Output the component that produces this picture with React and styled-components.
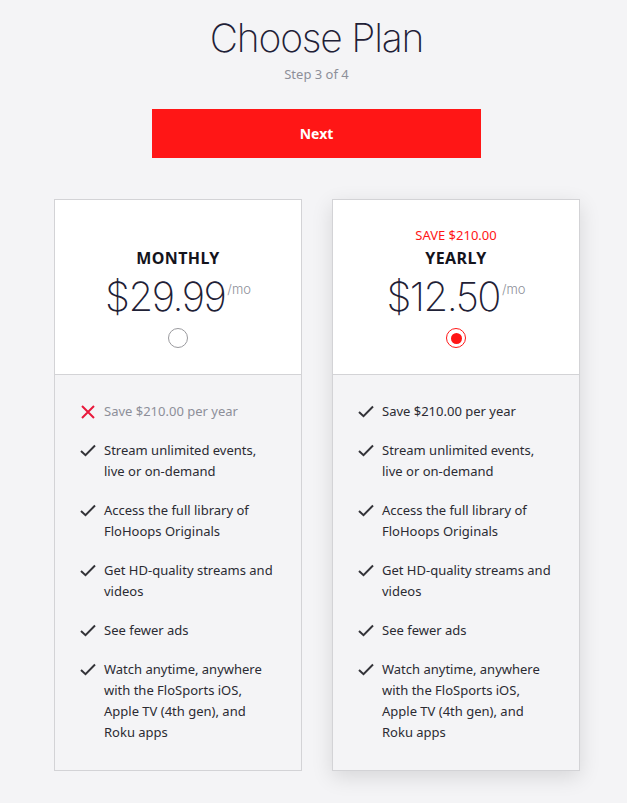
import React from "react";
import styled, { createGlobalStyle } from "styled-components";

const Global = createGlobalStyle`
  html, body { margin: 0; padding: 0; background: #f4f4f6; }
  body { font-family: "Noto Sans", "Liberation Sans", sans-serif; color: #2b2b33; }
  * { box-sizing: border-box; }
`;

const Page = styled.div`
  width: 627px;
  min-height: 803px;
  display: flex;
  flex-direction: column;
  align-items: center;
  padding: 16px 0 0 6px;
`;

const Title = styled.h1`
  margin: 0;
  font-family: "Inter", "Noto Sans", sans-serif;
  font-weight: 200;
  font-size: 39px;
  line-height: 44px;
  color: #1f2136;
  letter-spacing: -1.2px;
`;

const Step = styled.div`
  margin-top: 5px;
  font-size: 13px;
  line-height: 18px;
  color: #8d8f99;
`;

const NextButton = styled.button`
  margin-top: 26px;
  width: 329px;
  height: 49px;
  border: none;
  background: #ff1616;
  color: #fff;
  font-family: "Noto Sans", sans-serif;
  font-weight: 700;
  font-size: 14px;
  cursor: pointer;
`;

const Cards = styled.div`
  margin-top: 41px;
  display: grid;
  grid-template-columns: 248px 248px;
  gap: 30px;
  margin-left: 1px;
`;

const Card = styled.div`
  border: 1px solid #d3d3d6;
  display: flex;
  flex-direction: column;
  height: 572px;
  background: #f4f4f6;
  box-shadow: ${(p) => (p.$active ? "0 6px 20px rgba(0,0,0,0.12)" : "none")};
`;

const CardTop = styled.div`
  background: #fff;
  height: 175px;
  border-bottom: 1px solid #d3d3d6;
  display: flex;
  flex-direction: column;
  align-items: center;
  justify-content: flex-end;
  padding-bottom: 26px;
`;

const Save = styled.div`
  font-size: 13px;
  line-height: 16px;
  color: #ff1616;
  margin-bottom: 4px;
`;

const PlanName = styled.div`
  font-weight: 700;
  font-size: 16px;
  line-height: 22px;
  letter-spacing: 0.4px;
  color: #14141c;
`;

const PriceRow = styled.div`
  display: flex;
  align-items: flex-start;
  margin-top: 5px;
`;

const Price = styled.span`
  font-family: "Inter", "Noto Sans", sans-serif;
  font-weight: 200;
  font-size: 40px;
  line-height: 46px;
  color: #1f2136;
  letter-spacing: -1.5px;
`;

const Per = styled.span`
  font-family: "Inter", "Noto Sans", sans-serif;
  font-weight: 300;
  font-size: 13px;
  color: #8d8f99;
  margin-top: 7px;
  margin-left: 2px;
`;

const Radio = styled.div`
  margin-top: 8px;
  width: 20px;
  height: 20px;
  border-radius: 50%;
  border: 1px solid ${(p) => (p.$checked ? "#ff1616" : "#9a9a9e")};
  display: flex;
  align-items: center;
  justify-content: center;
  &::after {
    content: "";
    display: ${(p) => (p.$checked ? "block" : "none")};
    width: 11px;
    height: 11px;
    border-radius: 50%;
    background: #ff1616;
  }
`;

const List = styled.ul`
  list-style: none;
  margin: 0;
  padding: 26px 20px 0 25px;
  display: flex;
  flex-direction: column;
  gap: 18px;
`;

const Item = styled.li`
  display: flex;
  align-items: flex-start;
  gap: 8px;
  font-size: 13px;
  line-height: 21px;
  color: ${(p) => (p.$off ? "#8d8f99" : "#2b2b33")};
`;

const IconBox = styled.span`
  width: 16px;
  flex: 0 0 16px;
  height: 21px;
  display: flex;
  align-items: center;
  justify-content: center;
`;

const Check = () => (
  <svg width="16" height="13" viewBox="0 0 16 13">
    <path d="M1 7 L5.5 11.2 L15 1.5" fill="none" stroke="#333338" strokeWidth="2" />
  </svg>
);

const Cross = () => (
  <svg width="14" height="14" viewBox="0 0 14 14">
    <path d="M1 1 L13 13 M13 1 L1 13" fill="none" stroke="#e8193c" strokeWidth="2" />
  </svg>
);

const features = [
  ["Stream unlimited events,", "live or on-demand"],
  ["Access the full library of", "FloHoops Originals"],
  ["Get HD-quality streams and", "videos"],
  ["See fewer ads"],
  ["Watch anytime, anywhere", "with the FloSports iOS,", "Apple TV (4th gen), and", "Roku apps"],
];

const PlanCard = ({ name, price, save, checked, savingsIncluded }) => (
  <Card $active={checked}>
    <CardTop>
      {save && <Save>{save}</Save>}
      <PlanName>{name}</PlanName>
      <PriceRow>
        <Price>{price}</Price>
        <Per>/mo</Per>
      </PriceRow>
      <Radio $checked={checked} />
    </CardTop>
    <List>
      <Item $off={!savingsIncluded}>
        <IconBox>{savingsIncluded ? <Check /> : <Cross />}</IconBox>
        <span>Save $210.00 per year</span>
      </Item>
      {features.map((lines, i) => (
        <Item key={i}>
          <IconBox><Check /></IconBox>
          <span>
            {lines.map((l, j) => (
              <React.Fragment key={j}>
                {l}
                {j < lines.length - 1 && <br />}
              </React.Fragment>
            ))}
          </span>
        </Item>
      ))}
    </List>
  </Card>
);

export default function App() {
  return (
    <>
      <Global />
      <Page>
        <Title>Choose Plan</Title>
        <Step>Step 3 of 4</Step>
        <NextButton>Next</NextButton>
        <Cards>
          <PlanCard name="MONTHLY" price="$29.99" checked={false} savingsIncluded={false} />
          <PlanCard name="YEARLY" price="$12.50" save="SAVE $210.00" checked savingsIncluded />
        </Cards>
      </Page>
    </>
  );
}
